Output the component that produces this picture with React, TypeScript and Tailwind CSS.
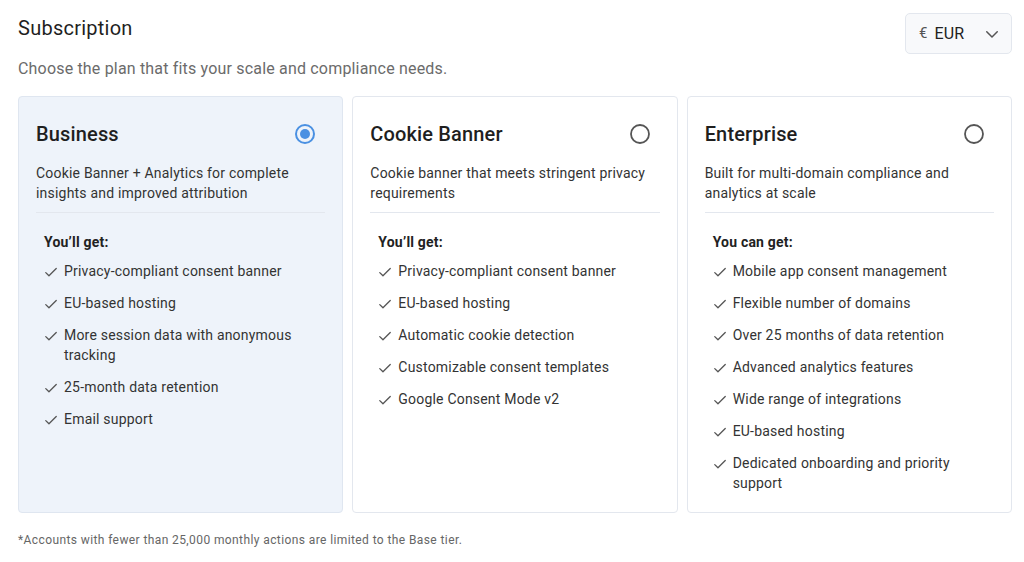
import React from "react";

type Plan = {
  name: string;
  desc: string;
  heading: string;
  items: string[];
  selected?: boolean;
};

const plans: Plan[] = [
  {
    name: "Business",
    desc: "Cookie Banner + Analytics for complete insights and improved attribution",
    heading: "You\u2019ll get:",
    items: [
      "Privacy-compliant consent banner",
      "EU-based hosting",
      "More session data with anonymous tracking",
      "25-month data retention",
      "Email support",
    ],
    selected: true,
  },
  {
    name: "Cookie Banner",
    desc: "Cookie banner that meets stringent privacy requirements",
    heading: "You\u2019ll get:",
    items: [
      "Privacy-compliant consent banner",
      "EU-based hosting",
      "Automatic cookie detection",
      "Customizable consent templates",
      "Google Consent Mode v2",
    ],
  },
  {
    name: "Enterprise",
    desc: "Built for multi-domain compliance and analytics at scale",
    heading: "You can get:",
    items: [
      "Mobile app consent management",
      "Flexible number of domains",
      "Over 25 months of data retention",
      "Advanced analytics features",
      "Wide range of integrations",
      "EU-based hosting",
      "Dedicated onboarding and priority support",
    ],
  },
];

function Check() {
  return (
    <svg width="14" height="14" viewBox="0 0 24 24" fill="none" stroke="#555" strokeWidth="2.2" strokeLinecap="round" strokeLinejoin="round" className="shrink-0 mt-[4px]">
      <path d="M3 13l5.5 5.5L21 6" />
    </svg>
  );
}

function Radio({ selected }: { selected?: boolean }) {
  return selected ? (
    <svg width="22" height="22" viewBox="0 0 22 22">
      <circle cx="11" cy="11" r="9" fill="none" stroke="#4a90e2" strokeWidth="2" />
      <circle cx="11" cy="11" r="5" fill="#4a90e2" />
    </svg>
  ) : (
    <svg width="22" height="22" viewBox="0 0 22 22">
      <circle cx="11" cy="11" r="9" fill="none" stroke="#555" strokeWidth="1.8" />
    </svg>
  );
}

export default function App() {
  return (
    <div className="w-[1024px] h-[562px] bg-white pl-[18px] pr-[12px] text-[#222]" style={{ fontFamily: "Roboto, 'Noto Sans', Arial, sans-serif" }}>
      <div className="flex justify-between items-start">
        <div>
          <h1 className="text-[20px] leading-[28px] font-normal tracking-[0.25px] text-[#1f1f1f] pt-[14px]">Subscription</h1>
          <p className="text-[16px] leading-[24px] tracking-[0.18px] text-[#6b6b6b] mt-[15px]">Choose the plan that fits your scale and compliance needs.</p>
        </div>
        <button className="mt-[13px] w-[107px] h-[41px] border border-[#e3e7ee] rounded-[5px] bg-[#f8f9fb] flex items-center pl-[13px] pr-[10px]">
          <span className="text-[15px] text-[#555] mr-[7px]">€</span>
          <span className="text-[16px] tracking-[0.2px] text-[#222]">EUR</span>
          <svg className="ml-auto" width="18" height="18" viewBox="0 0 24 24" fill="none" stroke="#555" strokeWidth="2" strokeLinecap="round" strokeLinejoin="round">
            <path d="M5 9l7 7 7-7" />
          </svg>
        </button>
      </div>

      <div className="grid grid-cols-3 gap-[9px] mt-[15px] w-[994px]">
        {plans.map((p) => (
          <div
            key={p.name}
            className={`h-[417px] rounded-[4px] border px-[17px] pt-[23px] ${
              p.selected ? "bg-[#eef3fa] border-[#dfe6f0]" : "bg-white border-[#e3e7ee]"
            }`}
          >
            <div className="flex items-center justify-between h-[28px] pr-[9px]">
              <h2 className="text-[20px] leading-[28px] font-medium tracking-[0.15px] text-[#1f1f1f]">{p.name}</h2>
              <Radio selected={p.selected} />
            </div>
            <p className="text-[14px] leading-[20px] tracking-[0.2px] text-[#333] mt-[15px] pb-[9px] border-b border-[#e3e7ee] min-h-[49px]">{p.desc}</p>
            <div className="pl-[8px] pt-[19px]">
              <div className="text-[14px] leading-[20px] font-bold tracking-[0.2px] text-[#222]">{p.heading}</div>
              <ul className="mt-[9px] flex flex-col gap-[12px]">
                {p.items.map((it) => (
                  <li key={it} className="flex gap-[6px] text-[14px] leading-[20px] tracking-[0.2px] text-[#333] pr-[20px]">
                    <Check />
                    <span>{it}</span>
                  </li>
                ))}
              </ul>
            </div>
          </div>
        ))}
      </div>

      <p className="text-[12px] leading-[16px] tracking-[0.4px] text-[#666] mt-[19px]">*Accounts with fewer than 25,000 monthly actions are limited to the Base tier.</p>
    </div>
  );
}
